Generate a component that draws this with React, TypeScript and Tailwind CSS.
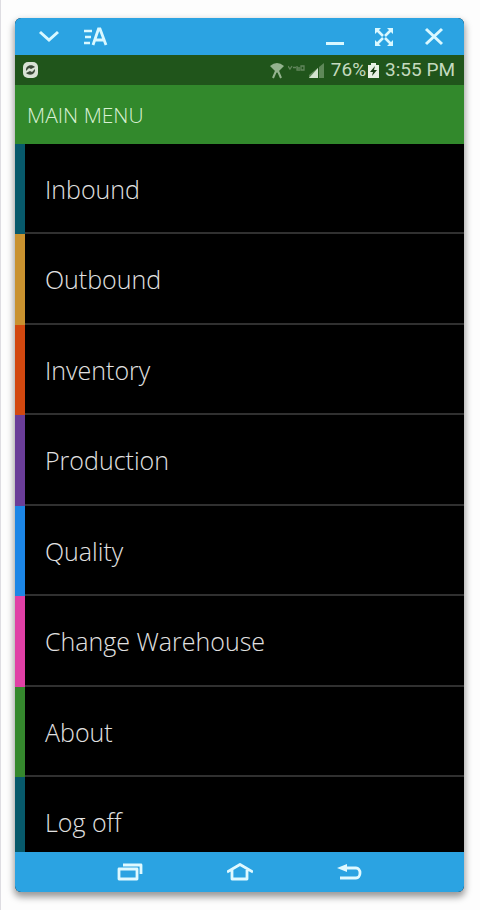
import React from "react";

const items = [
  { label: "Inbound", color: "bg-[#07596b]" },
  { label: "Outbound", color: "bg-[#c9922f]" },
  { label: "Inventory", color: "bg-[#d2480f]" },
  { label: "Production", color: "bg-[#6a3d98]" },
  { label: "Quality", color: "bg-[#1c86e6]" },
  { label: "Change Warehouse", color: "bg-[#e040a6]" },
  { label: "About", color: "bg-[#35882d]" },
  { label: "Log off", color: "bg-[#07596b]" },
];

function WindowBar() {
  return (
    <header className="flex h-[37px] shrink-0 items-center justify-between bg-[#2ba3e2] pr-5 pl-[23px] text-[#d9f8ff]">
      <div className="flex items-center gap-6">
        <button type="button" aria-label="Collapse">
          <svg className="block" width="22" height="24" viewBox="0 0 22 24" fill="none" stroke="currentColor" strokeWidth="3">
            <path d="M2 7 11 15l9-8" />
          </svg>
        </button>
        <button type="button" aria-label="Text options">
          <svg className="block" width="24" height="24" viewBox="0 0 24 24" fill="none" stroke="currentColor" strokeWidth="2.4">
            <path d="M0 6h8M1 12h6M0 18h6" />
            <path d="M9 20 14.500 4h1.500l6 16M10.500 15h9.500" strokeWidth="2.8" />
          </svg>
        </button>
      </div>
      <div className="flex items-center gap-7">
        <button type="button" aria-label="Minimize">
          <svg className="block" width="20" height="24" viewBox="0 0 20 24" fill="none" stroke="currentColor" strokeWidth="3">
            <path d="M0 18.500h18" />
          </svg>
        </button>
        <button type="button" aria-label="Full screen">
          <svg className="block" width="22" height="24" viewBox="0 0 22 24" fill="currentColor" stroke="currentColor">
            <path d="m3 5 6 6M17 5l-6 6M3 19l6-6M17 19l-6-6" strokeWidth="2.6" />
            <path d="M1 3h6l-6 6zM19 3v6l-6-6zM1 21v-6l6 6zM19 21h-6l6-6z" stroke="none" />
          </svg>
        </button>
        <button type="button" aria-label="Close">
          <svg className="block" width="20" height="24" viewBox="0 0 20 24" fill="none" stroke="currentColor" strokeWidth="3">
            <path d="m2 4 16 15M18 4 2 19" />
          </svg>
        </button>
      </div>
    </header>
  );
}

function StatusBar() {
  return (
    <div className="flex h-[30px] shrink-0 items-center justify-between bg-[#20551b] pr-[9px] pl-2 text-[#c4dabf]">
      <svg width="15" height="16" viewBox="0 0 15 16" role="img" aria-label="Sync">
        <rect width="15" height="16" rx="5" fill="#d9e2d5" />
        <path d="M3 8c0-5 6-6 9-3L8 7 6 6 3 9zM12 8c0 5-6 6-9 3l4-2 2 1 3-3z" fill="#3c4a39" />
      </svg>
      <div className="flex items-center font-[Roboto,sans-serif] text-[19px] leading-6">
        <svg width="14" height="17" viewBox="0 0 14 17" fill="none" className="mr-1 text-[#94b38f]" role="img" aria-label="Wi-Fi">
          <path d="M0 4Q7-2 14 4L7 11z" fill="currentColor" />
          <path d="M6 9 3 16M8 9l3 7" stroke="currentColor" strokeWidth="2" />
        </svg>
        <svg width="17" height="17" viewBox="0 0 17 17" fill="none" stroke="#62865c" strokeWidth="1.3" className="mr-1" role="img" aria-label="LTE">
          <path d="M0 4l2 3 2-3M5 5.500h3M9 4v4h3M9 6h3M13 4h3v4h-3z" />
        </svg>
        <svg width="16" height="17" viewBox="0 0 16 17" className="mr-[6px]" role="img" aria-label="Signal">
          <path d="M0 16V13L15 1v15z" fill="#5f8859" />
          <path d="M0 16 9 6v10z" fill="#d3e3cf" />
          <path d="M9.500 4v12" stroke="#20551b" strokeWidth="1" />
        </svg>
        <span>76%</span>
        <svg width="11" height="15" viewBox="0 0 11 15" className="mr-[6px] ml-[2px]" role="img" aria-label="Charging">
          <path d="M3 0h5v2h3v13H0V2h3z" fill="#e7f0e4" />
          <path d="M7 3 2 9h3l-1 4 5-6H6z" fill="#173d14" />
        </svg>
        <span>3:55 PM</span>
      </div>
    </div>
  );
}

function NavBar() {
  return (
    <nav className="flex h-10 shrink-0 items-center justify-center gap-[84px] bg-[#2ba3e2] text-[#e0f9ff]">
      <button type="button" aria-label="Recent apps">
        <svg className="block" width="26" height="20" viewBox="0 0 26 20" fill="none" stroke="currentColor" strokeWidth="2.8" strokeLinejoin="round">
          <rect x="2" y="7" width="18" height="10" />
          <path d="M6 3h18v9" />
        </svg>
      </button>
      <button type="button" aria-label="Home">
        <svg className="block" width="26" height="20" viewBox="0 0 26 20" fill="none" stroke="currentColor" strokeWidth="2.8" strokeLinejoin="round">
          <path d="M0 10 13 2.500 26 10M5 8v9h15V8" />
        </svg>
      </button>
      <button type="button" aria-label="Back">
        <svg className="block" width="26" height="20" viewBox="0 0 26 20" fill="none" stroke="currentColor" strokeWidth="2.8">
          <path d="M8 6h11a4 5 0 0 1 0 10H3" />
          <path d="M0 6 10 2v8z" fill="currentColor" stroke="none" />
        </svg>
      </button>
    </nav>
  );
}

export default function App() {
  return (
    <div className="h-screen border-l border-[#dedde2] bg-[#fdfdfd] py-[18px] pr-4 pl-[14px] font-['Open_Sans','Noto_Sans',sans-serif]">
      <div className="flex h-full flex-col overflow-hidden rounded-md bg-black shadow-[0_4px_7px_1px_rgba(0,0,0,0.4)]">
        <WindowBar />
        <StatusBar />
        <h1 className="h-[59px] shrink-0 bg-[#32892c] px-3 pt-4 text-[21px] leading-7 font-light text-[#d9f0d4]">
          MAIN MENU
        </h1>
        <ul className="flex min-h-0 flex-1 flex-col overflow-hidden">
          {items.map((item) => (
            <li key={item.label} className="flex flex-1 last:h-[75px] last:flex-none">
              <span className={`w-[10px] shrink-0 ${item.color}`} />
              <button
                type="button"
                className={`flex flex-1 items-start px-5 pt-7 text-left text-[25px] leading-[34px] font-light text-[#e2e2e2] ${
                  item.label === "Log off" ? "" : "border-b-2 border-[#303030]"
                }`}
              >
                {item.label}
              </button>
            </li>
          ))}
        </ul>
        <NavBar />
      </div>
    </div>
  );
}
